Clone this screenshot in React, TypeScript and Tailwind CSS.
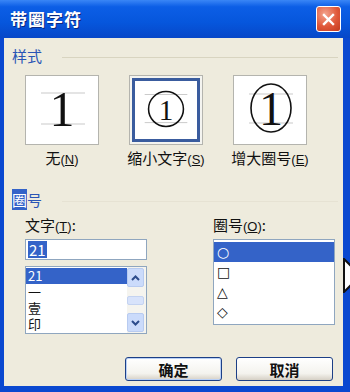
const FONT = "font-['Noto_Sans_CJK_SC','Liberation_Sans',sans-serif]";

const Guide = ({ y }: { y: number }) => (
  <line x1="15" x2="59" y1={y} y2={y} stroke="#c9c9c9" strokeWidth="1" />
);

const PlainSample = () => (
  <svg width="72" height="68" viewBox="0 0 72 68">
    <Guide y={17} />
    <Guide y={48} />
    <text x="36" y="50" textAnchor="middle" fontSize="50" fontFamily="Liberation Serif, serif" fill="#111">
      1
    </text>
  </svg>
);

const SmallSample = () => (
  <svg width="64" height="60" viewBox="0 0 64 60">
    <line x1="10" x2="54" y1="14" y2="14" stroke="#c9c9c9" />
    <line x1="10" x2="54" y1="43" y2="43" stroke="#c9c9c9" />
    <circle cx="32" cy="29" r="18" fill="none" stroke="#111" strokeWidth="1.6" />
    <text x="32" y="40" textAnchor="middle" fontSize="30" fontFamily="Liberation Serif, serif" fill="#111">
      1
    </text>
  </svg>
);

const BigSample = () => (
  <svg width="72" height="68" viewBox="0 0 72 68">
    <Guide y={18} />
    <Guide y={47} />
    <ellipse cx="37" cy="32" rx="20" ry="24" fill="none" stroke="#111" strokeWidth="1.6" />
    <text x="37" y="49" textAnchor="middle" fontSize="48" fontFamily="Liberation Serif, serif" fill="#111">
      1
    </text>
  </svg>
);

const Chevron = ({ up }: { up?: boolean }) => (
  <svg width="9" height="6" viewBox="0 0 9 6">
    <path d={up ? 'M1 5 L4.5 1.5 L8 5' : 'M1 1 L4.5 4.5 L8 1'} fill="none" stroke="#2c4c8c" strokeWidth="2" />
  </svg>
);

const Hot = ({ k }: { k: string }) => (
  <span className="font-['Liberation_Sans',sans-serif] text-[13px]">
    (<u>{k}</u>)
  </span>
);

export default function App() {
  return (
    <div className={`w-[350px] h-[392px] flex flex-col bg-[#0a48d0] relative overflow-hidden ${FONT}`}>
      {/* title bar */}
      <div className="h-[38px] flex items-center justify-between pl-[10px] pr-[9px] bg-[linear-gradient(180deg,#3a86f6_0%,#0c5ee6_18%,#0656dc_60%,#0747c8_100%)]">
        <span className="text-white text-[17px] font-bold tracking-[1px] [text-shadow:1px_1px_0_#0b2a80]">带圈字符</span>
        <div className="w-[25px] h-[26px] rounded-[3px] border border-white bg-[radial-gradient(circle_at_35%_30%,#f3a48d_0%,#e0583a_55%,#c23a1e_100%)] flex items-center justify-center">
          <svg width="13" height="13" viewBox="0 0 13 13">
            <path d="M2 2 L11 11 M11 2 L2 11" stroke="#fff" strokeWidth="2.4" strokeLinecap="square" />
          </svg>
        </div>
      </div>

      {/* client area */}
      <div className="flex-1 ml-[4px] mr-[7px] mb-[6px] bg-[#eeebdd] flex flex-col text-[#111]">
        {/* 样式 */}
        <div className="flex items-center mt-[8px] pl-[8px] pr-[5px]">
          <span className="text-[15px] leading-[20px] text-[#2a55b5]">样式</span>
          <div className="flex-1 h-px bg-[#d8d4c0] ml-[20px] mt-[2px]" />
        </div>

        <div className="flex mt-[9px] pl-[21px] gap-[30px]">
          <div className="w-[74px] flex flex-col items-center">
            <div className="w-[74px] h-[70px] border border-[#b4b4ae] bg-white flex items-center justify-center">
              <PlainSample />
            </div>
            <span className="mt-[3px] text-[15px] leading-[20px] whitespace-nowrap">
              无<Hot k="N" />
            </span>
          </div>
          <div className="w-[74px] flex flex-col items-center">
            <div className="w-[74px] h-[70px] border border-[#b4b4ae] bg-[#f4f4f0] p-[2px]">
              <div className="w-full h-full border-[3px] border-[#3a5c9e] bg-white flex items-center justify-center">
                <SmallSample />
              </div>
            </div>
            <span className="mt-[3px] text-[15px] leading-[20px] whitespace-nowrap">
              缩小文字<Hot k="S" />
            </span>
          </div>
          <div className="w-[74px] flex flex-col items-center">
            <div className="w-[74px] h-[70px] border border-[#b4b4ae] bg-white flex items-center justify-center">
              <BigSample />
            </div>
            <span className="mt-[3px] text-[15px] leading-[20px] whitespace-nowrap">
              增大圈号<Hot k="E" />
            </span>
          </div>
        </div>

        {/* 圈号 */}
        <div className="flex items-center mt-[20px] pl-[8px] pr-[5px]">
          <span className="text-[15px] leading-[20px] text-[#2a55b5]">
            <span className="bg-[#3463c8] text-white">圈</span>号
          </span>
          <div className="flex-1 h-px bg-[#e6e2d3] ml-[20px] mt-[2px]" />
        </div>

        <div className="flex mt-[5px] pl-[21px] gap-[66px]">
          {/* 文字 */}
          <div className="w-[122px] flex flex-col">
            <span className="text-[15px] leading-[20px] whitespace-nowrap">
              文字<Hot k="T" />:
            </span>
            <div className="mt-[2px] h-[21px] border border-[#8fa6bf] bg-white flex items-center pl-[2px]">
              <span className="bg-[#3463c8] text-white text-[15px] leading-[17px] px-px">21</span>
            </div>
            <div className="mt-[6px] h-[68px] border border-[#8fa6bf] bg-white flex overflow-hidden">
              <div className="flex-1 flex flex-col text-[13px] leading-[16px] pt-px">
                <span className="h-[16px] bg-[#3463c8] text-white pl-[2px]">21</span>
                <span className="h-[16px] pl-[2px]">一</span>
                <span className="h-[16px] pl-[2px]">壹</span>
                <span className="h-[16px] pl-[2px]">印</span>
              </div>
              <div className="w-[19px] flex flex-col bg-[#f5f4ef] py-px pr-[2px]">
                <div className="h-[19px] rounded-[2px] border border-[#b8cbf0] bg-[#cbdbfb] flex items-center justify-center">
                  <Chevron up />
                </div>
                <div className="flex-1 flex items-center">
                  <div className="w-full h-[9px] rounded-[2px] border border-[#c4d3f1] bg-[#d8e3fb]" />
                </div>
                <div className="h-[19px] rounded-[2px] border border-[#b8cbf0] bg-[#cbdbfb] flex items-center justify-center">
                  <Chevron />
                </div>
              </div>
            </div>
          </div>

          {/* 圈号 list */}
          <div className="w-[122px] flex flex-col">
            <span className="text-[15px] leading-[20px] whitespace-nowrap">
              圈号<Hot k="O" />:
            </span>
            <div className="mt-[2px] h-[86px] border border-[#8fa6bf] bg-white flex flex-col pt-[2px] text-[14px] leading-[20px] font-['DejaVu_Sans',sans-serif] font-bold">
              <span className="bg-[#3463c8] text-white pl-[3px]">○</span>
              <span className="pl-[3px]">□</span>
              <span className="pl-[3px]">△</span>
              <span className="pl-[3px]">◇</span>
            </div>
          </div>
        </div>

        {/* buttons */}
        <div className="flex justify-end gap-[14px] mt-[23px] pr-[10px]">
          <button className="w-[97px] h-[24px] rounded-[3px] border border-[#1c3f86] bg-[linear-gradient(180deg,#ffffff_0%,#f4f3ee_70%,#d6d0c5_100%)] shadow-[inset_0_0_0_1px_#b9d0f6] text-[15px] font-semibold leading-none">
            确定
          </button>
          <button className="w-[97px] h-[24px] rounded-[3px] border border-[#1c3f86] bg-[linear-gradient(180deg,#ffffff_0%,#f4f3ee_70%,#d6d0c5_100%)] text-[15px] font-semibold leading-none">
            取消
          </button>
        </div>
      </div>

      {/* mouse cursor over the right edge */}
      <svg className="absolute left-[343px] top-[258px]" width="8" height="35" viewBox="0 0 8 35">
        <path d="M1 1 L8 8 L8 27 L1 34 Z" fill="#fff" stroke="#111" strokeWidth="2" />
      </svg>
    </div>
  );
}
